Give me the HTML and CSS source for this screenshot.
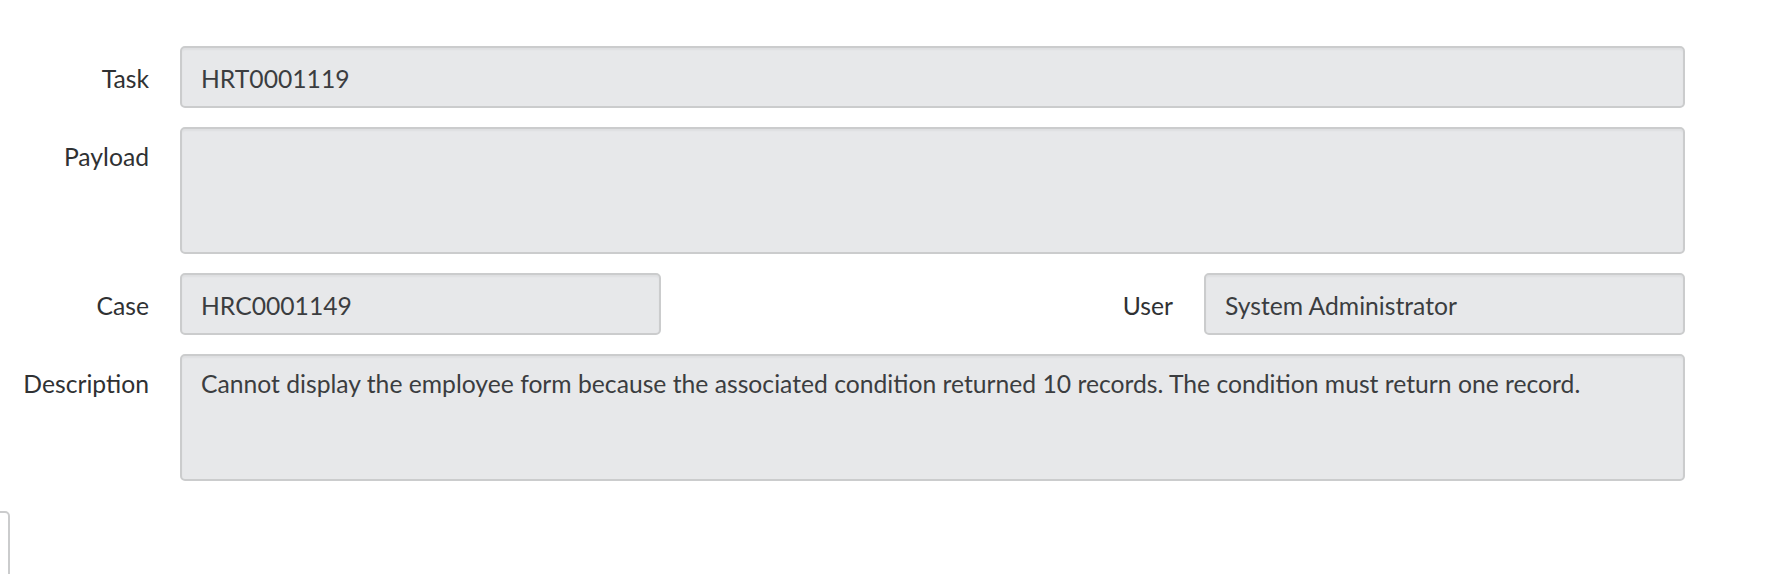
FILE: index.html
```html
<!DOCTYPE html>
<html lang="en">
<head>
  <meta charset="UTF-8">
  <title>Task Record</title>
  <meta name="viewport" content="width=device-width, initial-scale=1">
  <link rel="stylesheet" href="styles.css">
</head>
<body>

<form class="record-form">
  <div class="form-row">
    <label class="form-label">Task</label>
    <div class="form-field">HRT0001119</div>
  </div>

  <div class="form-row tall">
    <label class="form-label">Payload</label>
    <div class="form-field area"></div>
  </div>

  <div class="form-row split">
    <div class="form-group">
      <label class="form-label">Case</label>
      <div class="form-field half">HRC0001149</div>
    </div>
    <div class="form-group">
      <label class="form-label">User</label>
      <div class="form-field half">System Administrator</div>
    </div>
  </div>

  <div class="form-row tall">
    <label class="form-label">Description</label>
    <div class="form-field area">Cannot display the employee form because the associated condition returned 10 records. The condition must return one record.</div>
  </div>
</form>

<div class="form-actions">
  <div class="action-btn"></div>
</div>

</body>
</html>
```

FILE: styles.css
```css
* {
  box-sizing: border-box;
  margin: 0;
  padding: 0;
}

body {
  font-family: 'Lato', 'Open Sans', sans-serif;
  font-size: 24.7px;
  line-height: 32px;
  color: #2f3133;
  background: #fff;
  padding-top: 46px;
  overflow: hidden;
}

.record-form {
  display: flex;
  flex-direction: column;
  gap: 19px;
  padding-right: 105px;
}

.form-row {
  display: flex;
  align-items: center;
}

.form-row.tall {
  align-items: flex-start;
}

.form-row.split {
  justify-content: space-between;
}

.form-group {
  display: flex;
  align-items: center;
}

.form-label {
  width: 149px;
  margin-right: 31px;
  text-align: right;
  flex-shrink: 0;
  padding-top: 3px;
}

.form-group + .form-group .form-label {
  width: auto;
}

.tall .form-label {
  padding-top: 14px;
}

.form-field {
  flex: 1;
  height: 62px;
  padding: 3px 19px 0;
  display: flex;
  align-items: center;
  background: #e7e8ea;
  color: #3b3d40;
  border: 2px solid #cbcccd;
  border-radius: 5px;
  box-shadow: inset 0 2px 2px rgba(0, 0, 0, 0.04);
  white-space: nowrap;
}

.form-field.half {
  flex: none;
  width: 481px;
}

.form-field.area {
  height: 127px;
  align-items: flex-start;
  padding-top: 12px;
}

.form-actions {
  margin-top: 30px;
}

.action-btn {
  width: 30px;
  height: 70px;
  margin-left: -20px;
  border: 2px solid #cbcccd;
  border-radius: 5px;
  background: #fff;
}
```
